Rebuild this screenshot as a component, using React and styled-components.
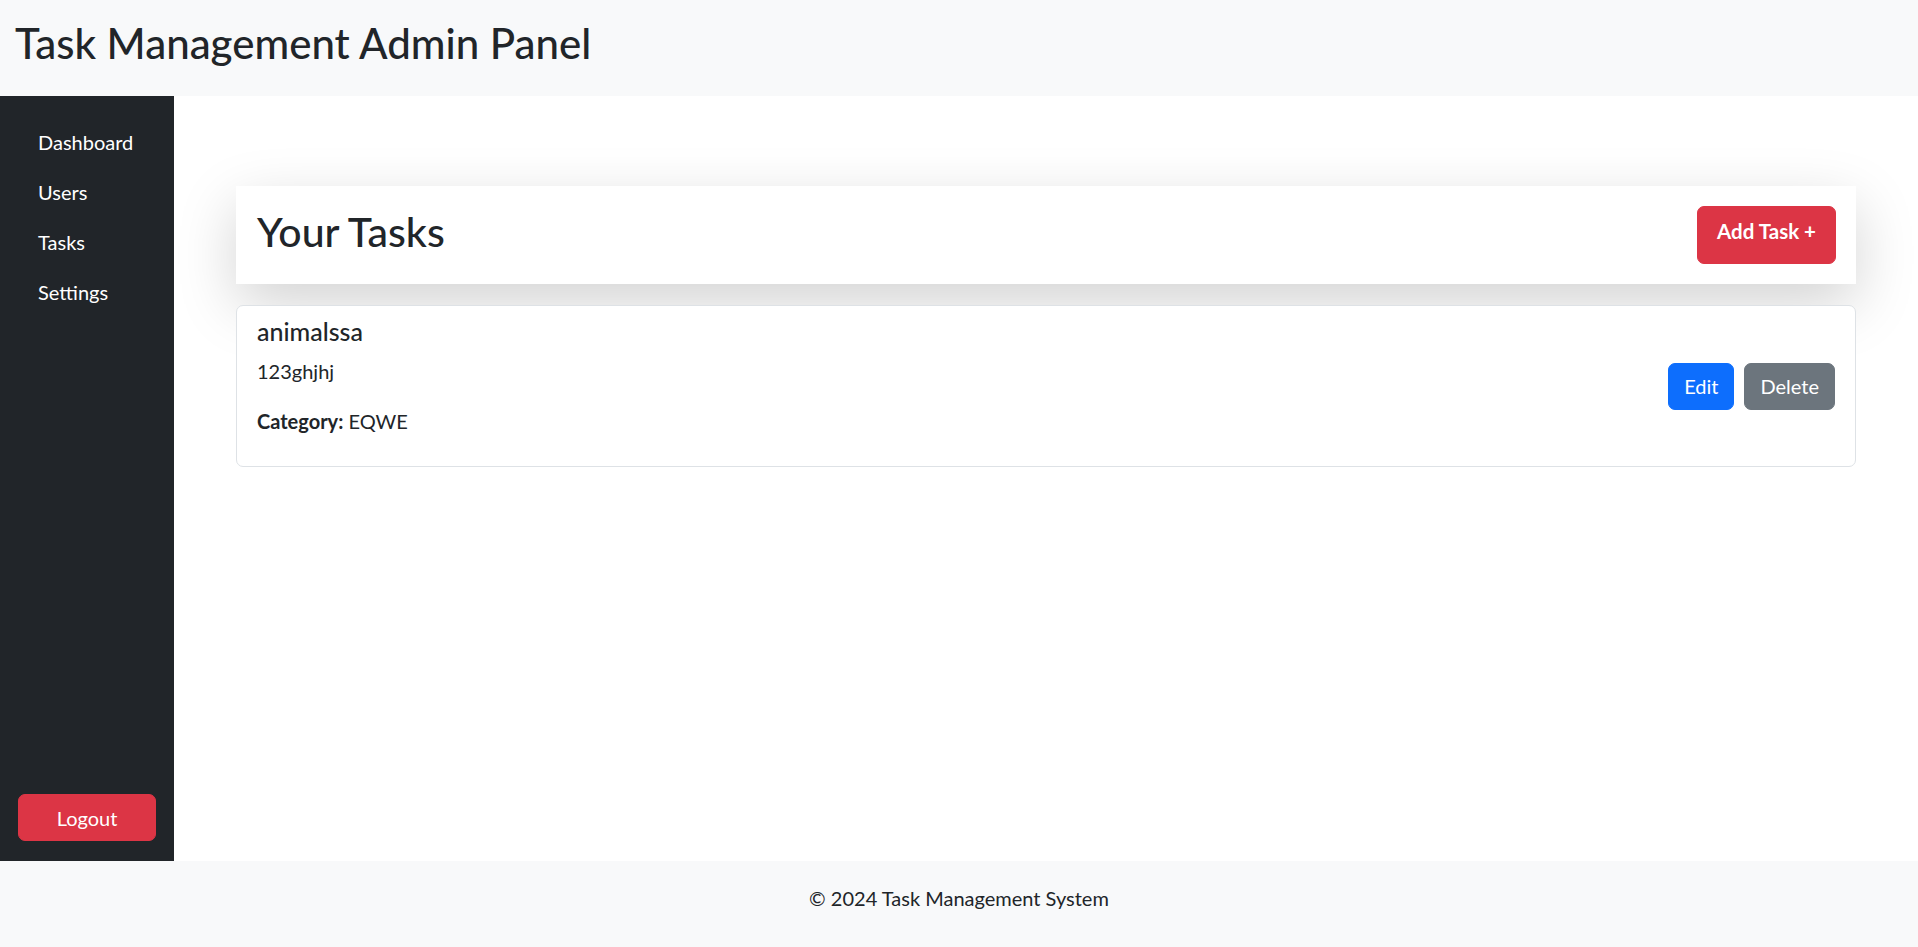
import React from "react";
import { styled, createGlobalStyle } from "styled-components";

const tasks = [
  { id: 1, title: "animalssa", description: "123ghjhj", category: "EQWE" },
];

const navItems = ["Dashboard", "Users", "Tasks", "Settings"];

function App() {
  return (
    <>
      <GlobalStyle />
      <Page>
        <Header>
          <Title size={42}>Task Management Admin Panel</Title>
        </Header>

        <Middle>
          <Sidebar>
            <Nav>
              {navItems.map((item) => (
                <NavLink key={item} href="#">
                  {item}
                </NavLink>
              ))}
            </Nav>
            <LogoutButton>Logout</LogoutButton>
          </Sidebar>

          <Main>
            <TasksHeader>
              <Title size={41} raise={6}>
                Your Tasks
              </Title>
              <AddButton>Add Task +</AddButton>
            </TasksHeader>

            {tasks.map((task) => (
              <TaskCard key={task.id}>
                <TaskInfo>
                  <TaskTitle>{task.title}</TaskTitle>
                  <TaskText>{task.description}</TaskText>
                  <TaskText>
                    <strong>Category:</strong> {task.category}
                  </TaskText>
                </TaskInfo>
                <Actions>
                  <ActionButton color="#0d6efd">Edit</ActionButton>
                  <ActionButton color="#6c757d">Delete</ActionButton>
                </Actions>
              </TaskCard>
            ))}
          </Main>
        </Middle>

        <Footer>
          <p>© 2024 Task Management System</p>
        </Footer>
      </Page>
    </>
  );
}

export default App;

const GlobalStyle = createGlobalStyle`
  * {
    box-sizing: border-box;
  }

  body {
    margin: 0;
    font-family: Lato, "Noto Sans", sans-serif;
    font-size: 20px;
    line-height: 1.5;
    color: #212529;
    background: #ffffff;
  }
`;

const Page = styled.div`
  display: flex;
  flex-direction: column;
  min-height: 100vh;
`;

const Header = styled.header`
  height: 96px;
  padding: 18px 15px 0;
  background: #f8f9fa;
`;

const Title = styled.h1`
  margin: 0 0 ${(props) => props.raise || 0}px;
  font-size: ${(props) => props.size}px;
  font-weight: 500;
  line-height: 1.2;
`;

const Middle = styled.div`
  flex: 1;
  display: flex;
`;

const Sidebar = styled.aside`
  width: 174px;
  flex-shrink: 0;
  display: flex;
  flex-direction: column;
  padding: 26px 18px 20px;
  background: #212529;
`;

const Nav = styled.nav`
  display: flex;
  flex-direction: column;
  gap: 10px;
`;

const NavLink = styled.a`
  display: block;
  padding: 5px 20px;
  color: #ffffff;
  text-decoration: none;
  line-height: 30px;
`;

const LogoutButton = styled.button`
  margin-top: auto;
  width: 100%;
  height: 47px;
  border: 1px solid #dc3545;
  border-radius: 7px;
  background: #dc3545;
  color: #ffffff;
  font-family: inherit;
  font-size: 20px;
  cursor: pointer;
`;

const Main = styled.main`
  flex: 1;
  padding: 90px 62px 40px;
`;

const TasksHeader = styled.div`
  display: flex;
  justify-content: space-between;
  align-items: center;
  padding: 20px 20px 20px 21px;
  margin-bottom: 21px;
  background: #ffffff;
  box-shadow: 0 20px 60px rgba(0, 0, 0, 0.175);
`;

const AddButton = styled.button`
  height: 58px;
  padding: 0 19px 8px;
  border: 1px solid #dc3545;
  border-radius: 7px;
  background: #dc3545;
  color: #ffffff;
  font-family: inherit;
  font-size: 20.5px;
  font-weight: 700;
  cursor: pointer;
`;

const TaskCard = styled.div`
  display: flex;
  justify-content: space-between;
  align-items: center;
  padding: 10px 20px;
  border: 1px solid #dee2e6;
  border-radius: 7px;
  background: #ffffff;
`;

const TaskInfo = styled.div`
  display: flex;
  flex-direction: column;
`;

const TaskTitle = styled.h5`
  margin: 0 0 10px;
  font-size: 25px;
  font-weight: 500;
  line-height: 30px;
`;

const TaskText = styled.p`
  margin: 0 0 20px;
  line-height: 30px;

  strong {
    font-weight: 700;
  }
`;

const Actions = styled.div`
  display: flex;
  gap: 10px;
`;

const ActionButton = styled.button`
  height: 47px;
  padding: 0 15px;
  border: 1px solid ${(props) => props.color};
  border-radius: 7px;
  background: ${(props) => props.color};
  color: #ffffff;
  font-family: inherit;
  font-size: 20px;
  cursor: pointer;
`;

const Footer = styled.footer`
  padding: 22px 0 34px;
  background: #f8f9fa;
  text-align: center;

  p {
    margin: 0;
    line-height: 30px;
  }
`;
